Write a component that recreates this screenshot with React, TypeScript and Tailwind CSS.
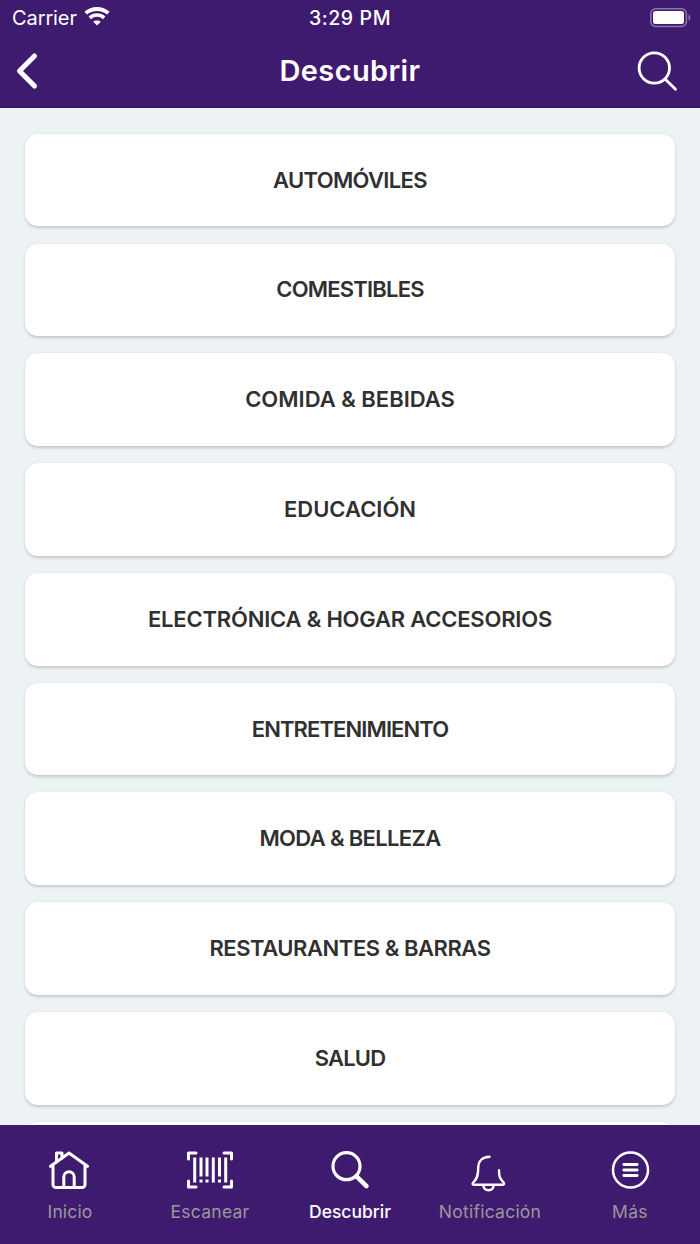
import type { ReactNode } from 'react';
import clsx from 'clsx';

const CATEGORIES = [
  { label: 'AUTOMÓVILES', tracking: 'tracking-[-0.65px]' },
  { label: 'COMESTIBLES', tracking: 'tracking-[-0.8px]' },
  { label: 'COMIDA & BEBIDAS', tracking: 'tracking-[0px]' },
  { label: 'EDUCACIÓN', tracking: 'tracking-[0px]' },
  { label: 'ELECTRÓNICA & HOGAR ACCESORIOS', tracking: 'tracking-[-0.2px]' },
  { label: 'ENTRETENIMIENTO', tracking: 'tracking-[-0.9px]' },
  { label: 'MODA & BELLEZA', tracking: 'tracking-[-0.65px]' },
  { label: 'RESTAURANTES & BARRAS', tracking: 'tracking-[-0.45px]' },
  { label: 'SALUD', tracking: 'tracking-[-0.8px]' },
  { label: '', tracking: '' },
];

function WifiIcon() {
  return (
    <svg className="-ml-px -mt-0.5" width="26" height="20" viewBox="0 0 26 20" fill="none" stroke="#fff">
      <path d="M1.7 6.2C8 .6 18 .6 24.3 6.2" strokeWidth="3.8" />
      <path d="M5.8 10.8C10 7.1 16 7.1 20.2 10.8" strokeWidth="3.6" />
      <path d="M13 18.6L9.2 14.8C11.2 12.9 14.8 12.9 16.8 14.8Z" fill="#fff" stroke="none" />
    </svg>
  );
}

function BatteryIcon() {
  return (
    <svg width="42" height="20" viewBox="0 0 42 20">
      <rect x=".8" y=".8" width="35.6" height="17.6" rx="5" fill="none" stroke="#8c77aa" strokeWidth="1.5" />
      <rect x="3" y="3" width="31" height="13" rx="2.8" fill="#fff" />
      <path d="M38.5 6.5c2.4 1 2.4 5.2 0 6.2Z" fill="#8c77aa" />
    </svg>
  );
}

function HomeIcon() {
  return (
    <svg className="-ml-[3px]" width="42" height="40" viewBox="0 0 42 40" fill="none" stroke="#fff" strokeWidth="3" strokeLinecap="round" strokeLinejoin="round">
      <path d="M2.5 16.3L21 3l18.5 13.3M5 15v19.5a3 3 0 0 0 3 3h26a3 3 0 0 0 3-3V15" />
      <path d="M15.8 37V27a5.2 5.2 0 0 1 10.4 0v10M8.5 12V3h5.5v5" />
    </svg>
  );
}

function BarcodeIcon() {
  return (
    <svg width="48" height="40" viewBox="0 0 48 40" fill="none" stroke="#fff" strokeWidth="3">
      <path d="M2.5 9V3H10M38 3h7.5v6M45.5 31v6H38M10 37H2.5v-6" strokeLinecap="round" strokeLinejoin="round" />
      <path d="M8.7 7.5v25M15 7.5v19M21 7.5v19M27.3 7.5v25M33.5 7.5v19M39.7 7.5v25M15 29.5v3M21 29.5v3M33.5 29.5v3" />
    </svg>
  );
}

function SearchTabIcon() {
  return (
    <svg className="-ml-px" width="40" height="40" viewBox="0 0 40 40" fill="none" stroke="#fff" strokeLinecap="round">
      <circle cx="16.5" cy="16.2" r="13.5" strokeWidth="3.2" />
      <path d="M26.5 26.3L36.5 36.2" strokeWidth="4.5" />
    </svg>
  );
}

function BellIcon() {
  return (
    <svg className="-ml-[4px] overflow-visible" width="36" height="40" viewBox="0 0 36 40" fill="none" stroke="#fff" strokeWidth="2.4" strokeLinecap="round" strokeLinejoin="round">
      <path d="M19.5 6.8C12 6.8 8.200 11.5 8.200 18c0 7-.8 10.500-4.700 14.200C2 33.800 2.300 34.800 4 34.800h28.500c1.800 0 2.200-1.300.8-2.600C29.500 28.500 29 26 29 20.200" />
      <path d="M13.2 35.2c.8 6.800 9.800 6.800 10.600 0" />
    </svg>
  );
}

function MoreIcon() {
  return (
    <svg width="40" height="40" viewBox="0 0 40 40" fill="none" stroke="#fff" strokeLinecap="round">
      <circle cx="20.5" cy="20" r="17.5" strokeWidth="2.5" />
      <path d="M13.8 14.5h13.4M13.8 20h13.4M13.8 25.5h13.4" strokeWidth="2.8" />
    </svg>
  );
}

const TABS: { label: string; icon: ReactNode; tracking: string; active?: boolean }[] = [
  { label: 'Inicio', icon: <HomeIcon />, tracking: 'tracking-[0.15px]' },
  { label: 'Escanear', icon: <BarcodeIcon />, tracking: 'tracking-[0.25px]' },
  { label: 'Descubrir', icon: <SearchTabIcon />, tracking: 'tracking-[0px]', active: true },
  { label: 'Notificación', icon: <BellIcon />, tracking: 'tracking-[0.25px]' },
  { label: 'Más', icon: <MoreIcon />, tracking: 'tracking-[0.3px]' },
];

function Header() {
  return (
    <header className="flex h-[108px] shrink-0 flex-col border-b border-[#34125f] bg-[#3f1b70] text-white">
      <div className="grid h-[35px] grid-cols-3 items-center pl-3 pr-2">
        <div className="flex items-center gap-2 text-[20px] tracking-[-0.1px]">
          <span>Carrier</span>
          <WifiIcon />
        </div>
        <span className="pr-1 pt-0.5 text-center text-[19.5px] font-medium tracking-[0.6px]">3:29 PM</span>
        <div className="flex justify-end">
          <BatteryIcon />
        </div>
      </div>
      <div className="grid h-[71px] grid-cols-[60px_1fr_60px] items-center">
        <svg className="ml-3.5" width="26" height="40" viewBox="0 0 26 40" fill="none" stroke="#fff" strokeWidth="5" strokeLinecap="round" strokeLinejoin="round">
          <path d="M20.5 5L5.5 20L20.5 35" />
        </svg>
        <h1 className="text-center text-[29px] font-semibold leading-none tracking-[0.35px]">Descubrir</h1>
        <svg className="-ml-3" width="60" height="44" viewBox="0 0 60 44" fill="none" stroke="#fff" strokeWidth="2.8" strokeLinecap="round">
          <circle cx="26.3" cy="19" r="15.2" />
          <path d="M37 30L47.5 40.3" />
        </svg>
      </div>
    </header>
  );
}

export default function App() {
  return (
    <div className="flex h-[1244px] w-[700px] flex-col overflow-hidden bg-[#edf2f5] font-['Inter',sans-serif]">
      <Header />
      <main className="flex flex-1 flex-col gap-[17.1px] overflow-hidden px-[25.3px] pt-[25.8px]">
        {CATEGORIES.map((c, i) => (
          <div
            key={i}
            className="flex h-[92.7px] shrink-0 items-center justify-center rounded-[13px] bg-white text-[22px] font-semibold text-[#303030] shadow-[0_1.5px_3px_rgba(0,0,0,0.17)]"
          >
            <span className={clsx('whitespace-nowrap', c.tracking)}>{c.label}</span>
          </div>
        ))}
      </main>
      <nav className="grid h-[119px] shrink-0 grid-cols-5 bg-[#3f1b70] pt-[25px]">
        {TABS.map((t) => (
          <div key={t.label} className="flex flex-col items-center gap-2">
            {t.icon}
            <span className={clsx('text-[17.5px] leading-[27px]', t.tracking, t.active ? 'font-medium text-white' : 'text-[#9a9799]')}>
              {t.label}
            </span>
          </div>
        ))}
      </nav>
    </div>
  );
}
